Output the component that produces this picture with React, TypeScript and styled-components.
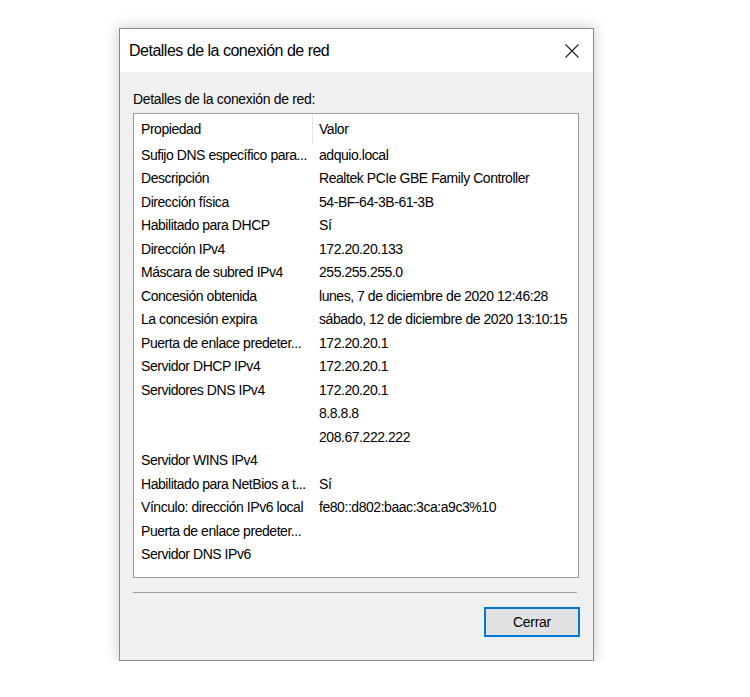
import styled, { createGlobalStyle } from "styled-components";

const GlobalStyle = createGlobalStyle`
  html, body {
    margin: 0;
    padding: 0;
    background: #ffffff;
  }
  body {
    font-family: "Liberation Sans", Arial, sans-serif;
    color: #000;
  }
`;

const Page = styled.div`
  padding: 28px 0 0 119px;
`;

const Dialog = styled.div`
  width: 473px;
  height: 631px;
  border: 1px solid #8a8a8a;
  background: #f0f0f0;
  box-shadow: 0 0 14px rgba(0, 0, 0, 0.22);
  display: flex;
  flex-direction: column;
`;

const TitleBar = styled.div`
  height: 43px;
  background: #ffffff;
  display: flex;
  align-items: center;
  justify-content: space-between;
  padding: 0 14px 0 9px;
`;

const Title = styled.div`
  font-size: 16px;
  letter-spacing: -0.5px;
  color: #000;
  padding-top: 1px;
`;

const CloseBtn = styled.div`
  width: 14px;
  height: 14px;
  display: flex;
`;

const Body = styled.div`
  flex: 1;
  display: flex;
  flex-direction: column;
  padding: 19px 14px 0 13px;
`;

const Label = styled.div`
  font-size: 14px;
  letter-spacing: -0.33px;
  height: 22px;
  line-height: 16px;
`;

const ListBox = styled.div`
  height: 463px;
  border: 1px solid #9a9ca0;
  background: #ffffff;
  display: flex;
  flex-direction: column;
`;

const Row = styled.div<{ $header?: boolean }>`
  display: grid;
  grid-template-columns: 178px 1fr;
  height: ${(p) => (p.$header ? "29px" : "23.5px")};
  align-items: center;
  font-size: 14px;
  letter-spacing: -0.45px;
  white-space: nowrap;
`;

const Cell = styled.div<{ $divider?: boolean }>`
  padding-left: ${(p) => (p.$divider ? "6px" : "7px")};
  height: 100%;
  display: flex;
  align-items: center;
  border-left: ${(p) => (p.$divider ? "1px solid #e5e5e5" : "none")};
  overflow: hidden;
`;

const Separator = styled.div`
  margin-top: 14px;
  margin-right: 2px;
  border-top: 1px solid #a0a0a0;
`;

const Footer = styled.div`
  display: flex;
  justify-content: flex-end;
  padding-top: 14px;
  margin-right: -1px;
`;

const Button = styled.button`
  width: 96px;
  height: 30px;
  border: 2px solid #0078d7;
  background: #e1e1e1;
  font-family: "Liberation Sans", Arial, sans-serif;
  font-size: 14px;
  letter-spacing: -0.3px;
  color: #000;
  padding: 0;
`;

const rows: [string, string][] = [
  ["Sufijo DNS específico para...", "adquio.local"],
  ["Descripción", "Realtek PCIe GBE Family Controller"],
  ["Dirección física", "54-BF-64-3B-61-3B"],
  ["Habilitado para DHCP", "Sí"],
  ["Dirección IPv4", "172.20.20.133"],
  ["Máscara de subred IPv4", "255.255.255.0"],
  ["Concesión obtenida", "lunes, 7 de diciembre de 2020 12:46:28"],
  ["La concesión expira", "sábado, 12 de diciembre de 2020 13:10:15"],
  ["Puerta de enlace predeter...", "172.20.20.1"],
  ["Servidor DHCP IPv4", "172.20.20.1"],
  ["Servidores DNS IPv4", "172.20.20.1"],
  ["", "8.8.8.8"],
  ["", "208.67.222.222"],
  ["Servidor WINS IPv4", ""],
  ["Habilitado para NetBios a t...", "Sí"],
  ["Vínculo: dirección IPv6 local", "fe80::d802:baac:3ca:a9c3%10"],
  ["Puerta de enlace predeter...", ""],
  ["Servidor DNS IPv6", ""],
];

export default function App() {
  return (
    <Page>
      <GlobalStyle />
      <Dialog>
        <TitleBar>
          <Title>Detalles de la conexión de red</Title>
          <CloseBtn>
            <svg width="14" height="14" viewBox="0 0 14 14">
              <path d="M0.5 0.5 L13.5 13.5 M13.5 0.5 L0.5 13.5" stroke="#222" strokeWidth="1.1" />
            </svg>
          </CloseBtn>
        </TitleBar>
        <Body>
          <Label>Detalles de la conexión de red:</Label>
          <ListBox>
            <Row $header>
              <Cell>Propiedad</Cell>
              <Cell $divider>Valor</Cell>
            </Row>
            {rows.map(([prop, value], i) => (
              <Row key={i}>
                <Cell>{prop}</Cell>
                <Cell>{value}</Cell>
              </Row>
            ))}
          </ListBox>
          <Separator />
          <Footer>
            <Button>Cerrar</Button>
          </Footer>
        </Body>
      </Dialog>
    </Page>
  );
}
